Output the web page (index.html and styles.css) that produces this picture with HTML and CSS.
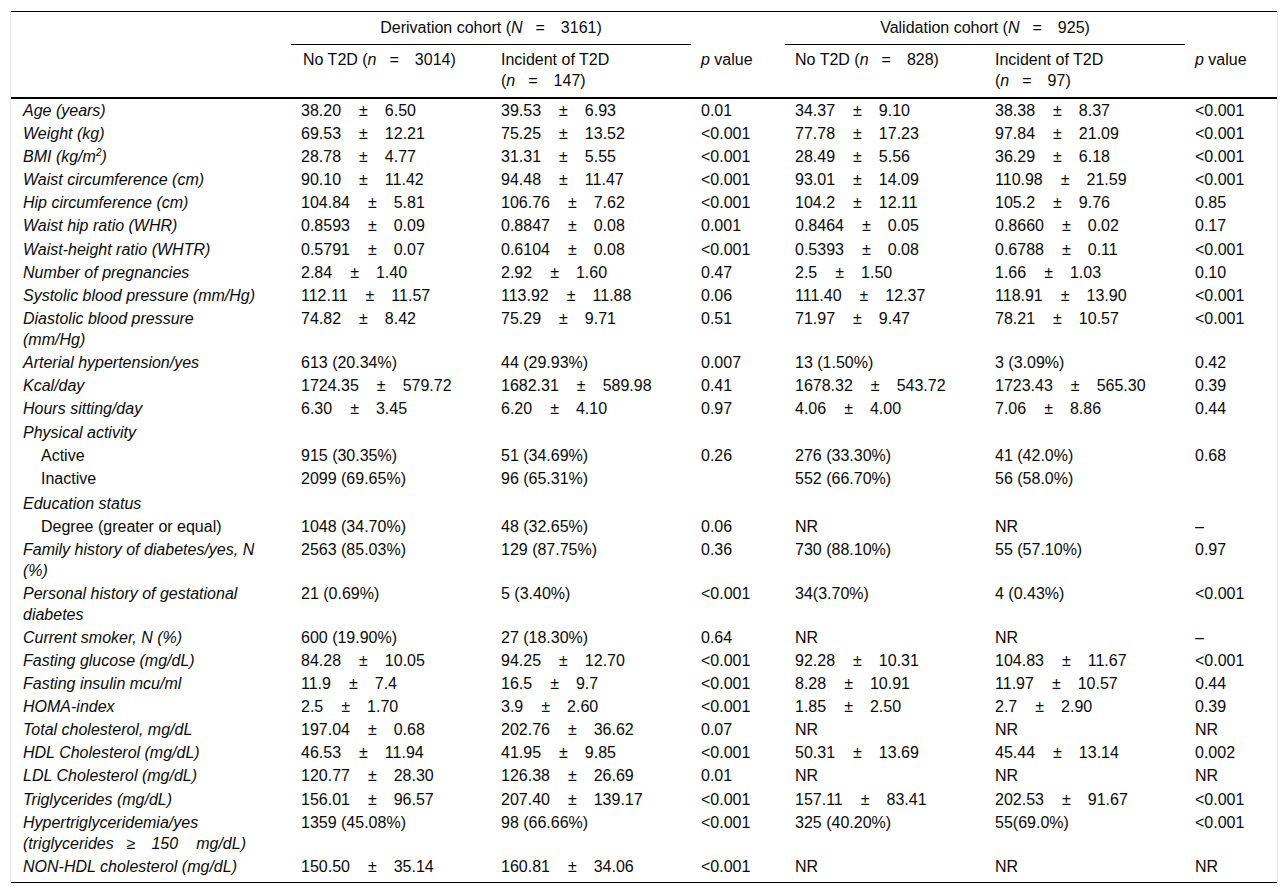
FILE: index.html
```html
<!DOCTYPE html>
<html lang="en">
<head>
<meta charset="utf-8">
<title>Table</title>
<link rel="stylesheet" href="styles.css">
</head>
<body>
<div class="frame">
<table class="data">
  <colgroup>
    <col class="c-label"><col class="c-val"><col class="c-val"><col class="c-p"><col class="c-val"><col class="c-val"><col class="c-p2">
  </colgroup>
  <thead>
    <tr class="h1">
      <th rowspan="2" class="blank"></th>
      <th colspan="2" class="group">Derivation cohort (<i>N</i><span class="sp">=</span>3161)</th>
      <th class="blank"></th>
      <th colspan="2" class="group">Validation cohort (<i>N</i><span class="sp">=</span>925)</th>
      <th class="blank"></th>
    </tr>
    <tr class="h2">
      <th>No T2D (<i>n</i><span class="sp">=</span>3014)</th>
      <th>Incident of T2D (<i>n</i><span class="sp">=</span>147)</th>
      <th><i>p</i> value</th>
      <th>No T2D (<i>n</i><span class="sp">=</span>828)</th>
      <th>Incident of T2D (<i>n</i><span class="sp">=</span>97)</th>
      <th><i>p</i> value</th>
    </tr>
  </thead>
  <tbody>
    <tr><td class="lbl">Age (years)</td><td>38.20<span class="pm">±</span>6.50</td><td>39.53<span class="pm">±</span>6.93</td><td>0.01</td><td>34.37<span class="pm">±</span>9.10</td><td>38.38<span class="pm">±</span>8.37</td><td>&lt;0.001</td></tr>
    <tr><td class="lbl">Weight (kg)</td><td>69.53<span class="pm">±</span>12.21</td><td>75.25<span class="pm">±</span>13.52</td><td>&lt;0.001</td><td>77.78<span class="pm">±</span>17.23</td><td>97.84<span class="pm">±</span>21.09</td><td>&lt;0.001</td></tr>
    <tr><td class="lbl">BMI (kg/m<sup>2</sup>)</td><td>28.78<span class="pm">±</span>4.77</td><td>31.31<span class="pm">±</span>5.55</td><td>&lt;0.001</td><td>28.49<span class="pm">±</span>5.56</td><td>36.29<span class="pm">±</span>6.18</td><td>&lt;0.001</td></tr>
    <tr><td class="lbl">Waist circumference (cm)</td><td>90.10<span class="pm">±</span>11.42</td><td>94.48<span class="pm">±</span>11.47</td><td>&lt;0.001</td><td>93.01<span class="pm">±</span>14.09</td><td>110.98<span class="pm">±</span>21.59</td><td>&lt;0.001</td></tr>
    <tr><td class="lbl">Hip circumference (cm)</td><td>104.84<span class="pm">±</span>5.81</td><td>106.76<span class="pm">±</span>7.62</td><td>&lt;0.001</td><td>104.2<span class="pm">±</span>12.11</td><td>105.2<span class="pm">±</span>9.76</td><td>0.85</td></tr>
    <tr><td class="lbl">Waist hip ratio (WHR)</td><td>0.8593<span class="pm">±</span>0.09</td><td>0.8847<span class="pm">±</span>0.08</td><td>0.001</td><td>0.8464<span class="pm">±</span>0.05</td><td>0.8660<span class="pm">±</span>0.02</td><td>0.17</td></tr>
    <tr><td class="lbl">Waist-height ratio (WHTR)</td><td>0.5791<span class="pm">±</span>0.07</td><td>0.6104<span class="pm">±</span>0.08</td><td>&lt;0.001</td><td>0.5393<span class="pm">±</span>0.08</td><td>0.6788<span class="pm">±</span>0.11</td><td>&lt;0.001</td></tr>
    <tr><td class="lbl">Number of pregnancies</td><td>2.84<span class="pm">±</span>1.40</td><td>2.92<span class="pm">±</span>1.60</td><td>0.47</td><td>2.5<span class="pm">±</span>1.50</td><td>1.66<span class="pm">±</span>1.03</td><td>0.10</td></tr>
    <tr><td class="lbl">Systolic blood pressure (mm/Hg)</td><td>112.11<span class="pm">±</span>11.57</td><td>113.92<span class="pm">±</span>11.88</td><td>0.06</td><td>111.40<span class="pm">±</span>12.37</td><td>118.91<span class="pm">±</span>13.90</td><td>&lt;0.001</td></tr>
    <tr><td class="lbl">Diastolic blood pressure (mm/Hg)</td><td>74.82<span class="pm">±</span>8.42</td><td>75.29<span class="pm">±</span>9.71</td><td>0.51</td><td>71.97<span class="pm">±</span>9.47</td><td>78.21<span class="pm">±</span>10.57</td><td>&lt;0.001</td></tr>
    <tr><td class="lbl">Arterial hypertension/yes</td><td>613 (20.34%)</td><td>44 (29.93%)</td><td>0.007</td><td>13 (1.50%)</td><td>3 (3.09%)</td><td>0.42</td></tr>
    <tr><td class="lbl">Kcal/day</td><td>1724.35<span class="pm">±</span>579.72</td><td>1682.31<span class="pm">±</span>589.98</td><td>0.41</td><td>1678.32<span class="pm">±</span>543.72</td><td>1723.43<span class="pm">±</span>565.30</td><td>0.39</td></tr>
    <tr><td class="lbl">Hours sitting/day</td><td>6.30<span class="pm">±</span>3.45</td><td>6.20<span class="pm">±</span>4.10</td><td>0.97</td><td>4.06<span class="pm">±</span>4.00</td><td>7.06<span class="pm">±</span>8.86</td><td>0.44</td></tr>
    <tr class="grp"><td class="lbl">Physical activity</td><td></td><td></td><td></td><td></td><td></td><td></td></tr>
    <tr><td class="sub">Active</td><td>915 (30.35%)</td><td>51 (34.69%)</td><td>0.26</td><td>276 (33.30%)</td><td>41 (42.0%)</td><td>0.68</td></tr>
    <tr><td class="sub">Inactive</td><td>2099 (69.65%)</td><td>96 (65.31%)</td><td></td><td>552 (66.70%)</td><td>56 (58.0%)</td><td></td></tr>
    <tr class="grp"><td class="lbl">Education status</td><td></td><td></td><td></td><td></td><td></td><td></td></tr>
    <tr><td class="sub">Degree (greater or equal)</td><td>1048 (34.70%)</td><td>48 (32.65%)</td><td>0.06</td><td>NR</td><td>NR</td><td>–</td></tr>
    <tr><td class="lbl">Family history of diabetes/yes, N (%)</td><td>2563 (85.03%)</td><td>129 (87.75%)</td><td>0.36</td><td>730 (88.10%)</td><td>55 (57.10%)</td><td>0.97</td></tr>
    <tr><td class="lbl">Personal history of gestational diabetes</td><td>21 (0.69%)</td><td>5 (3.40%)</td><td>&lt;0.001</td><td>34(3.70%)</td><td>4 (0.43%)</td><td>&lt;0.001</td></tr>
    <tr><td class="lbl">Current smoker, N (%)</td><td>600 (19.90%)</td><td>27 (18.30%)</td><td>0.64</td><td>NR</td><td>NR</td><td>–</td></tr>
    <tr><td class="lbl">Fasting glucose (mg/dL)</td><td>84.28<span class="pm">±</span>10.05</td><td>94.25<span class="pm">±</span>12.70</td><td>&lt;0.001</td><td>92.28<span class="pm">±</span>10.31</td><td>104.83<span class="pm">±</span>11.67</td><td>&lt;0.001</td></tr>
    <tr><td class="lbl">Fasting insulin mcu/ml</td><td>11.9<span class="pm">±</span>7.4</td><td>16.5<span class="pm">±</span>9.7</td><td>&lt;0.001</td><td>8.28<span class="pm">±</span>10.91</td><td>11.97<span class="pm">±</span>10.57</td><td>0.44</td></tr>
    <tr><td class="lbl">HOMA-index</td><td>2.5<span class="pm">±</span>1.70</td><td>3.9<span class="pm">±</span>2.60</td><td>&lt;0.001</td><td>1.85<span class="pm">±</span>2.50</td><td>2.7<span class="pm">±</span>2.90</td><td>0.39</td></tr>
    <tr><td class="lbl">Total cholesterol, mg/dL</td><td>197.04<span class="pm">±</span>0.68</td><td>202.76<span class="pm">±</span>36.62</td><td>0.07</td><td>NR</td><td>NR</td><td>NR</td></tr>
    <tr><td class="lbl">HDL Cholesterol (mg/dL)</td><td>46.53<span class="pm">±</span>11.94</td><td>41.95<span class="pm">±</span>9.85</td><td>&lt;0.001</td><td>50.31<span class="pm">±</span>13.69</td><td>45.44<span class="pm">±</span>13.14</td><td>0.002</td></tr>
    <tr><td class="lbl">LDL Cholesterol (mg/dL)</td><td>120.77<span class="pm">±</span>28.30</td><td>126.38<span class="pm">±</span>26.69</td><td>0.01</td><td>NR</td><td>NR</td><td>NR</td></tr>
    <tr><td class="lbl">Triglycerides (mg/dL)</td><td>156.01<span class="pm">±</span>96.57</td><td>207.40<span class="pm">±</span>139.17</td><td>&lt;0.001</td><td>157.11<span class="pm">±</span>83.41</td><td>202.53<span class="pm">±</span>91.67</td><td>&lt;0.001</td></tr>
    <tr><td class="lbl">Hypertriglyceridemia/yes (triglycerides<span class="sp">≥</span>150<span class="gap"></span>mg/dL)</td><td>1359 (45.08%)</td><td>98 (66.66%)</td><td>&lt;0.001</td><td>325 (40.20%)</td><td>55(69.0%)</td><td>&lt;0.001</td></tr>
    <tr class="last"><td class="lbl">NON-HDL cholesterol (mg/dL)</td><td>150.50<span class="pm">±</span>35.14</td><td>160.81<span class="pm">±</span>34.06</td><td>&lt;0.001</td><td>NR</td><td>NR</td><td>NR</td></tr>
  </tbody>
</table>
</div>
</body>
</html>
```

FILE: styles.css
```css
html, body {
  margin: 0;
  padding: 0;
  background: #ffffff;
}

body {
  font-family: "Liberation Sans", Arial, sans-serif;
  font-size: 16px;
  color: #0a0a0a;
}

.frame {
  margin: 11px 10px 0 10px;
  border-left: 1px solid #e8e8e8;
  border-right: 1px solid #e8e8e8;
}

.data {
  width: 1266px;
  table-layout: fixed;
  border-collapse: collapse;
  border-top: 1px solid #000;
  border-bottom: 1px solid #000;
}

.c-label { width: 280px; }
.c-val { width: 200px; }
.c-p { width: 94px; }
.c-p2 { width: 92px; }

.data th,
.data td {
  text-align: left;
  font-weight: normal;
  vertical-align: top;
  line-height: 21px;
  padding: 1px 10px 1.1px 10px;
}

.data thead th {
  padding-top: 4.5px;
  padding-bottom: 6px;
}

.data thead .h2 th {
  border-bottom: 2px solid #000;
}

.data thead th.group {
  text-align: center;
  border-bottom: 1px solid #000;
}

.data thead th.blank {
  border-bottom: 2px solid #000;
}

.data thead .h1 th.blank:not([rowspan]) {
  border-bottom: none;
}

.data td:first-child,
.data th:first-child {
  padding-left: 12px;
}

.data td.lbl {
  font-style: italic;
  padding-right: 34px;
}

.data td.sub {
  padding-left: 30px;
  padding-right: 34px;
}

.data tr.grp td {
  padding-top: 2px;
}

.data tr.last td {
  padding-bottom: 5px;
}

.pm {
  margin: 0 17px 0 18px;
}

.sp {
  margin: 0 16px 0 13px;
}

.gap {
  display: inline-block;
  width: 18px;
}

sup {
  font-size: 10px;
  line-height: 0;
  vertical-align: 6px;
}
```
